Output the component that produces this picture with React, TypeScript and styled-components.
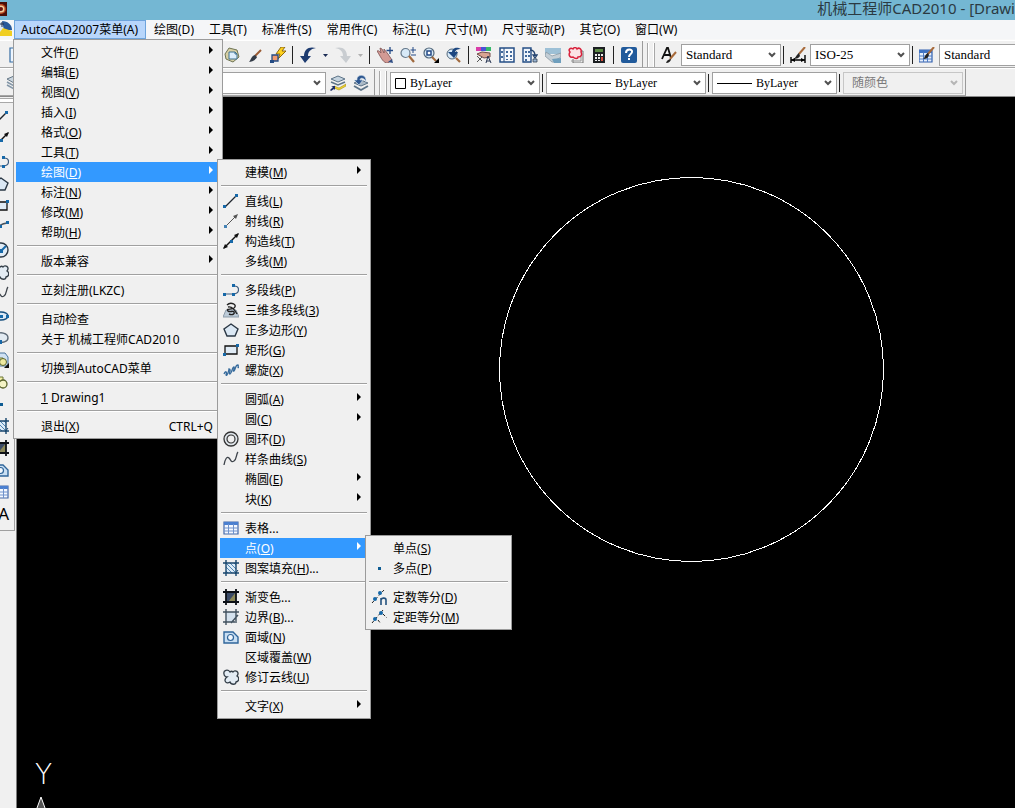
import React from 'react';
import styled, { createGlobalStyle, css } from 'styled-components';

const GlobalStyle = createGlobalStyle`
  * { box-sizing: border-box; }
  body {
    margin: 0;
    background: #f0f0f0;
    color: #000;
    font: 12px/20px "Noto Sans", "Noto Sans CJK SC", sans-serif;
  }
  button, select { font: inherit; color: inherit; }
`;

/* ---------- layout ---------- */

const Window = styled.div`
  display: flex;
  flex-direction: column;
  min-height: 100vh;
  overflow: hidden;
`;

const TitleBar = styled.header`
  display: flex;
  align-items: center;
  justify-content: space-between;
  height: 20px;
  background: #74b7d3;
  overflow: hidden;
`;

const Title = styled.h1`
  margin: 0 0 4px;
  font-size: 15px;
  line-height: 20px;
  font-weight: 400;
  white-space: nowrap;
  color: #2b3a42;
`;

const AppIcon = styled.svg`
  width: 14px;
  height: 18px;
  flex: none;
  display: block;
`;

const MenuBar = styled.nav`
  display: flex;
  height: 20px;
  background: #f5f6f8;
  border-bottom: 1px solid #f8f8f8;
`;

const MenuHost = styled.div`
  position: relative;
  display: flex;
  z-index: 10;
`;

const MenuTitle = styled.button<{ $open?: boolean }>`
  height: 19px;
  padding: ${(p) => (p.$open ? '0 7px 0 6px' : '0 6px')};
  margin-right: 1px;
  line-height: 17px;
  white-space: nowrap;
  background: ${(p) => (p.$open ? '#b8d6fb' : 'transparent')};
  border: 1px solid ${(p) => (p.$open ? '#6ea4dc' : 'transparent')};
`;

const ToolRow = styled.div`
  display: flex;
  height: 28px;
  border-top: 1px solid #fff;
  overflow: hidden;
`;

const ToolRows = styled.div`
  border-bottom: 1px solid #8a8a8a;
`;

const ToolStrip = styled.div<{ $open?: boolean }>`
  display: flex;
  flex: none;
  align-items: center;
  padding: 2px 2px 0;
  border-right: ${(p) => (p.$open ? '0' : '1px solid #9a9a9a')};
  border-bottom: 1px solid #a6a6a6;
  ${(p) => p.$open && css`flex: 1;`}
`;

const Hidden = styled.div`
  width: 195px;
`;

const ToolButton = styled.button`
  display: flex;
  align-items: center;
  justify-content: center;
  width: 23px;
  height: 24px;
  padding: 0;
  border: 0;
  background: none;
  flex: none;
`;

const SplitArrow = styled(ToolButton)<{ $off?: boolean }>`
  width: 12px;
  color: ${(p) => (p.$off ? '#b0b0b0' : '#1b2c55')};
`;

const Divider = styled.span<{ $tight?: boolean }>`
  width: 1px;
  height: 18px;
  margin: 0 ${(p) => (p.$tight ? 2 : 3)}px;
  background: #222;
  flex: none;
`;

const Grip = styled.span`
  width: 8px;
  height: 24px;
  margin: 0 2px;
  border: solid #a8a8a8;
  border-width: 0 1px;
  box-shadow: inset 1px 0 #fff, inset -1px 0 #fff;
  flex: none;
`;

const ComboBox = styled.label<{ $width: number; $off?: boolean }>`
  display: flex;
  align-items: center;
  gap: 4px;
  flex: none;
  width: ${(p) => p.$width}px;
  height: 22px;
  margin-left: 1px;
  padding: 0 4px;
  border: 1px solid ${(p) => (p.$off ? '#c6c6c6' : '#a0a0a0')};
  background: ${(p) => (p.$off ? '#f0f0f0' : '#fff')};
  color: ${(p) => (p.$off ? '#7a7a7a' : '#000')};
`;

const ComboSelect = styled.select<{ $large?: boolean }>`
  appearance: none;
  flex: 1;
  min-width: 0;
  padding: 0;
  border: 0;
  background: transparent;
  opacity: 1;
  color: inherit;
  font-family: "Liberation Serif", "Noto Sans CJK SC", serif;
  font-size: ${(p) => (p.$large ? 13 : 12)}px;
  line-height: 18px;
`;

const Workspace = styled.main`
  display: flex;
  flex: 1;
`;

const Dock = styled.aside`
  width: 17px;
  flex: none;
  border-right: 1px solid #7c7c7c;
`;

const DrawTools = styled.div`
  display: flex;
  flex-direction: column;
  width: 15px;
  padding-bottom: 5px;
  border-right: 1px solid #a0a0a0;
  border-bottom: 1px solid #a0a0a0;
  overflow: hidden;
`;

const DockGrip = styled.span`
  height: 5px;
  margin: 1px 0 4px;
  border: solid #a8a8a8;
  border-width: 1px 0;
  background: #fff;
`;

const DockButton = styled.button`
  display: flex;
  align-items: center;
  justify-content: flex-end;
  height: 22px;
  padding: 0 5px 0 0;
  border: 0;
  background: none;
  font-size: 17px;
  svg { flex: none; }
`;

const Canvas = styled.svg`
  flex: 1;
  min-width: 0;
  background: #000;
  overflow: hidden;
`;

const AxisLabel = styled.text`
  font-family: "DejaVu Sans Light", "DejaVu Sans", sans-serif;
  font-weight: 200;
  font-size: 28px;
  fill: #fff;
`;

/* ---------- menus ---------- */

const Popup = styled.ul<{ $width: number; $sub?: boolean }>`
  position: absolute;
  top: ${(p) => (p.$sub ? '-3px' : '19px')};
  left: ${(p) => (p.$sub ? 'calc(100% - 3px)' : '-1px')};
  width: ${(p) => p.$width}px;
  margin: 0;
  padding: 2px;
  list-style: none;
  background: #f0f0f0;
  border: 1px solid #9b9b9b;
  z-index: 1;
`;

const Entry = styled.li`
  position: relative;
`;

const EntryButton = styled.button<{ $active?: boolean }>`
  display: grid;
  grid-template-columns: 22px 1fr auto;
  align-items: center;
  width: 100%;
  height: 20px;
  padding: 0 2px 0 3px;
  border: 0;
  text-align: left;
  white-space: nowrap;
  background: ${(p) => (p.$active ? '#3399ff' : 'transparent')};
  color: ${(p) => (p.$active ? '#fff' : '#000')};
`;

const EntryIcon = styled.span`
  display: flex;
`;

const EntryText = styled.span`
  padding-top: 2px;
  line-height: 18px;
`;

const Shortcut = styled(EntryText)`
  margin-right: 5px;
`;

const Arrow = styled.svg`
  width: 4px;
  height: 8px;
  margin: 0 5px 4px 0;
  fill: currentColor;
`;

const Rule = styled.li`
  margin: 3px 1px 4px;
  border-top: 1px solid #a0a0a0;
  border-bottom: 1px solid #fff;
`;

/* ---------- icons ---------- */

const Blue = '#1668a8';
const ink = '#20262e';

const art: Record<string, React.ReactNode> = {
  line: <><path d="M2 14 14 2" stroke={ink} strokeWidth="1.3" /><path d="M0 12h3v3H0zM12 1h3v3h-3z" fill={Blue} /></>,
  ray: <><path d="M2 14 14 2" stroke="#555" /><path d="m15 1-5 2 3 3z" fill="#555" /><path d="M1 12h3v3H1z" fill="#4583b5" /></>,
  xline: <><path d="M1 15 15 1" stroke="#111" strokeWidth="1.4" /><path d="m16 0-5 2 3 3zM0 16l2-5 3 3z" fill="#111" /><path d="M7 7h3v3H7z" fill={Blue} /></>,
  pline: <><path d="M1 12h9M11 4c6 0 6 7 0 8" fill="none" stroke="#3d5c7e" strokeWidth="1.2" /><path d="M0 11h3v3H0zM9 11h3v3H9zM9 2h3v3H9z" fill={Blue} /></>,
  poly3d: <><path d="M3 8h10l3 7H0z" fill="#bccbd8" stroke="#8b9aa8" /><path d="M4 3c4-4 11 0 7 3-3 2-8 0-6 3 2 2 5-1 6 1 1 3-3 3-5 2M5 5c4-1 7 3 9 7" fill="none" stroke="#222" strokeWidth="1.4" /></>,
  polygon: <path d="m8 2 7 5-3 7H4L1 7z" fill="#dbe8f4" stroke="#2a3744" strokeWidth="1.4" />,
  rect: <><path d="M2 4h12v8H2z" fill="#e0ebf5" stroke="#111" strokeWidth="1.3" /><path d="M0 11h3v3H0zM13 2h3v3h-3z" fill={Blue} /></>,
  helix: <path d="M1 12c2-4 3-2 2 1 1 2 3-5 3-6 3 0-1 5 1 5 2-1 2-7 4-7 1 2-2 5 0 4 2-2 1-6 4-6 1 1-1 4 1 2" fill="none" stroke="#356a9c" strokeWidth="1.3" />,
  donut: <><circle cx="8" cy="8" r="7" fill="#dfe5ea" stroke="#333" strokeWidth="1.3" /><circle cx="8" cy="8" r="4" fill="#f0f0f0" stroke="#333" strokeWidth="1.2" /></>,
  spline: <path d="M1 14c1-6 3-9 5-7s2 5 5 3 2-7 4-9" fill="none" stroke="#3d434a" strokeWidth="1.3" />,
  table: <><path d="M1 2h14v12H1z" fill="#f4f8ff" stroke="#4468a8" strokeWidth="1.2" /><path d="M1 2h14v3H1z" fill="#4a7fd0" /><path d="M1 8h14M1 11h14M5.500 4v10M10.500 4v10" stroke="#6f92cc" /></>,
  hatch: <><path d="M3 3h10v10H3z" fill="#dcebf7" /><path d="m3 3 10 10M7 3l6 6M3 7l6 6M11 3l2 2M3 11l2 2" stroke="#4f86b4" /><path d="M3 0v16M13 0v16M0 3h16M0 13h16" stroke="#17466d" strokeWidth="1.4" /><path d="m12 14 3-4" stroke="#17466d" /></>,
  gradient: <><path d="M3 3h10v10H3z" fill="#3a4a66" /><path d="M13 3v10H5z" fill="#8a8757" /><path d="M3 0v16M13 0v16M0 3h16M0 13h16" stroke="#0c1016" strokeWidth="1.8" /></>,
  boundary: <><path d="M3 3h10v6l-4 4H3z" fill="#d5e2ee" /><path d="M3 0v16M13 0v14M0 3h16M0 13h12M8 14l7-8" stroke="#42525f" strokeWidth="1.4" /></>,
  region: <><path d="M1 3h9l5 5v6H1z" fill="#c9dff3" stroke="#2f659a" strokeWidth="1.4" /><circle cx="7.500" cy="8.500" r="3" fill="#f3f8fd" stroke="#2f659a" strokeWidth="1.2" /></>,
  cloud: <path d="M7 3C5 0 0 1 1 5c0 2 2 3 3 3-4 3-1 8 3 5 1 3 6 3 6 0 4-1 3-5 1-6 3-4-2-7-4-4-1-1-2-1-3 0z" fill="#e3ecf4" stroke="#333e48" strokeWidth="1.3" />,
  dot: <path d="M7 7h3v3H7z" fill="#0e5c93" />,
  divide: <><path d="M1 14 13 1" stroke="#222" strokeDasharray="3 2" /><circle cx="4" cy="10" r="2" fill={Blue} /><circle cx="9" cy="4" r="2" fill={Blue} /><path d="M10 16V9v2c1-3 5-2 5 0v5" fill="none" stroke="#24527e" strokeWidth="1.6" /></>,
  measure: <><path d="M1 14 12 1M7 11l3 4M12 5l4 4" stroke="#222" strokeDasharray="3 2" /><circle cx="4" cy="10" r="2" fill={Blue} /><circle cx="10" cy="4" r="2" fill={Blue} /></>,
  arc: <><path d="M1 15C2 8 7 4 14 3" fill="none" stroke="#4b5661" strokeWidth="1.3" /><path d="M13 1h3v3h-3zM6 5h3v3H6z" fill={Blue} /></>,
  circle: <><circle cx="8" cy="8" r="7" fill="#e0ebf5" stroke="#2a3744" strokeWidth="1.4" /><path d="m8 9 5-5" stroke={Blue} strokeWidth="2" /><path d="M6 7h4v4H6z" fill={Blue} /></>,
  ellipse: <><ellipse cx="8" cy="8" rx="7" ry="4" fill="#dbe9f6" stroke="#174f7e" strokeWidth="1.4" /><path d="M13 7h3v3h-3zM7 7h3v3H7z" fill={Blue} /></>,
  earc: <><path d="M2 5c5-4 13-2 13 3 0 4-6 5-10 4" fill="#e2eaf1" stroke="#5b6875" strokeWidth="1.4" /><path d="M5 10h4v4H5z" fill={Blue} /></>,
  insert: <><path d="M3 1h9l3 4v9H3z" fill="#cfe1f3" stroke="#49749e" /><path d="M3 6h7v6H3z" fill="#f2f0a0" stroke="#6b7436" /><circle cx="10" cy="10" r="3.500" fill="#eeeaa0" stroke="#59632c" /><path d="M16 11v5h-5z" fill="#111" /></>,
  block: <><path d="M2 3h8v6H2z" fill="#f3f0a8" stroke="#6b7436" /><circle cx="10" cy="10" r="4" fill="#f4f3c5" stroke="#59632c" strokeWidth="1.3" /></>,
  doc: <path d="M4 1h12v14H4z" fill="#eef6ff" stroke="#356da3" strokeWidth="1.2" />,
  layers: <><path d="m1 4 7-3 7 3-7 4z" fill="#cbd6df" stroke="#657887" /><path d="m1 7 7 4 7-4M1 10l7 4 7-4" fill="none" stroke="#8497a8" strokeWidth="1.5" /></>,
  publish: <><path d="m1 7 4-6 8 2 2 7-6 5-7-3z" fill="#d7cfa4" stroke="#6f7554" /><path d="M5 5h6l2 2v5H5z" fill="#dceefc" stroke="#3d7190" /><path d="M11 5v2h2" fill="none" stroke="#3d7190" /></>,
  brush: <><path d="m8 9 6-6" stroke="#9b5c34" strokeWidth="2" /><path d="M2 15c2 0 7-2 8-5L8 8c-4 1-4 5-6 7z" fill="#333b47" /></>,
  match: <><path d="M11 0 6 7h4l-2 5 8-8h-4l3-4z" fill="#ffd21d" stroke="#8b6715" /><path d="M2 8h6v6H2z" fill="#f19a70" stroke="#234b84" strokeWidth="1.300" /><path d="M0 13h4v3H0z" fill="#234b84" /></>,
  undo: <path d="M16 1C9-1 4 2 4 9H0l5 7 6-7H8c0-4 2-7 8-8z" fill="#1d3b70" />,
  redo: <path d="M0 1c7-2 12 1 12 8h4l-5 7-6-7h3c0-4-2-7-8-8z" fill="#c9cdd1" />,
  pan: <><path d="M0 4c2-1 3 1 4 2L3 1l2 1 2 4 0-4 4 5 4 6-4 3c-5 0-6-4-11-12z" fill="#d39a94" stroke="#7c5151" strokeWidth=".8" /><path d="m11 15 4-3 1 4z" fill="#2f4e85" /><path d="M13 0v7M9.500 3.500H16" stroke="#244a86" strokeWidth="1.3" /></>,
  zoom: <><circle cx="5.500" cy="6" r="4.500" fill="#d7e9f7" stroke="#65788a" strokeWidth="1.2" /><path d="m9 9 5 6" stroke="#a0693d" strokeWidth="2.200" /><path d="M13 0v6M10.500 3H16M11 8h5" stroke="#244a86" /></>,
  zoomwin: <><circle cx="6" cy="6" r="5" fill="#d7e9f7" stroke="#53687b" strokeWidth="1.2" /><path d="M4 4h4v4H4z" fill="#fff" stroke="#244a86" strokeWidth="1.5" /><path d="m9 10 4 4" stroke="#a0693d" strokeWidth="2.200" /><path d="M16 11v5h-5z" fill="#000" /></>,
  zoomprev: <><circle cx="6" cy="7" r="5" fill="#d7e9f7" stroke="#53687b" /><path d="M15 2C10-1 6 2 6 5H2l6 6 4-6h-3c0-2 3-3 6-3z" fill="#1d4780" /><path d="m10 11 4 4" stroke="#a0693d" strokeWidth="2.200" /></>,
  props: <><path d="M0 0h5v4H0z" fill="#d93ca8" /><path d="M5 0h5v4H5z" fill="#4b52d6" /><path d="M10 0h5v4h-5z" fill="#35b86a" /><path d="m1 7 5-2 8 1v4l-6 1z" fill="#d9a493" stroke="#704b49" /><path d="m1 9 5 5M6 10l-5 5" stroke="#555" /><path d="m10 16 2-7 3 7M11 14h3" fill="none" stroke="#23314f" /></>,
  dcenter: <><path d="M1 1h14v14H1z" fill="#f6f9fd" stroke="#254e85" strokeWidth="1.5" /><path d="M5 1v14" stroke="#254e85" /><path d="M7 4h2v2H7zM11 4h2v2h-2zM7 8h2v2H7zM11 8h2v2h-2zM7 12h2v1H7zM11 12h2v1h-2zM2 4h2v2H2zM2 9h2v2H2z" fill="#40689b" /></>,
  palette: <><path d="M1 1h8v14H1z" fill="#eef4fb" stroke="#254e85" strokeWidth="1.4" /><path d="M3 4h2v2H3zM6 4h2v2H6zM3 8h2v2H3zM6 8h2v2H6zM3 12h2v2H3z" fill="#40689b" /><path d="M8 3c4 0 5 2 5 6M11 8h4l-2 3z" fill="none" stroke="#24436f" strokeWidth="1.3" /><path d="M11 12h4v3h-4z" fill="#9bb4d1" stroke="#345" strokeWidth=".8" /></>,
  sheet: <><path d="M0 1h16v6H0z" fill="#9dc0d6" /><path d="m1 5 6 4 9-3v4l-5 3 5 2H7L0 9z" fill="#c3ced6" stroke="#8998a3" strokeWidth=".8" /><path d="m7 12 9-1v5H9z" fill="#6f9fbd" /></>,
  markup: <><path d="M6 4h9v12H5v-4" fill="#ececec" stroke="#777" /><path d="M13 3v11H3" fill="none" stroke="#999" /><path d="M5 2C2 0 0 3 2 5c-2 3 0 6 3 5 2 2 5 2 5 0 4 0 4-3 3-5 1-3-2-5-4-3-1-2-3-2-4 0z" fill="#fbe3e5" stroke="#d8213b" strokeWidth="1.500" /></>,
  calc: <><path d="M2 0h12v16H2z" fill="#1c1f22" /><path d="M4 2h8v3H4z" fill="#5b8a45" /><path d="M4 7h2v2H4zM7 7h2v2H7zM10 7h2v2h-2zM4 10h2v2H4zM7 10h2v2H7zM4 13h2v1H4zM7 13h2v1H7z" fill="#eee" /><path d="M10 10h2v4h-2z" fill="#d34b3c" /></>,
  help: <><rect x="0" y="0" width="16" height="16" rx="2" fill="#215a9b" /><path d="M5 6c0-5 7-4 6-1 0 2-3 2-3 5" fill="none" stroke="#fff" strokeWidth="2" /><path d="M7 11h2v2H7z" fill="#fff" /></>,
  textstyle: <><path d="m1 12 5-11h1l3 10M3 8h6" fill="none" stroke="#111" strokeWidth="1.8" /><path d="m9 12 6-7" stroke="#a86a3a" strokeWidth="2" /><path d="M5 16c1-3 3-4 5-4 0 2-2 4-5 4z" fill="#222" /></>,
  dimstyle: <><path d="m9 7 6-7" stroke="#a86a3a" strokeWidth="2" /><path d="M3 12c3-1 3-4 6-6l1 3c-1 2-3 3-7 3z" fill="#222" /><path d="M1 10v6M15 8v8M1 13h14" stroke="#000" strokeWidth="1.400" /><path d="m1 13 4-2v4zM15 13l-4-2v4z" /></>,
  tablestyle: <><path d="M0 3h13v12H0z" fill="#e6effc" stroke="#305fae" strokeWidth="1.2" /><path d="M0 3h13v3H0z" fill="#3f73c4" /><path d="M0 9h13M0 12h13M4.500 5v10M8.500 5v10" stroke="#4f7cc4" /><path d="m9 7 6-7" stroke="#a86a3a" strokeWidth="2" /><path d="M4 12c2-1 2-5 5-6l1 2c-1 3-3 4-6 4z" fill="#222" /></>,
  layerset: <><path d="m1 4 7-3 7 3-7 3z" fill="#c4d3df" stroke="#5d7488" /><path d="m1 7 7 3 7-3" fill="none" stroke="#5d7488" strokeWidth="1.500" /><path d="m4 11 5 2 7-4v2l-7 4-5-2z" fill="#f2d52a" stroke="#a18a20" strokeWidth=".6" /><path d="M1 11h4v4l-1-1-3 2-1-1 3-3z" fill="#1b2c66" /></>,
  layerprev: <><path d="m1 8 7-3 7 3-7 3z" fill="#aab9c6" stroke="#5d7488" /><path d="m1 11 7 4 7-4" fill="none" stroke="#5d7488" strokeWidth="1.800" /><path d="M13 7c1-9-10-8-9-2H1l5 5 4-5H7c0-3 5-2 6 2z" fill="#2c568f" stroke="#dce7f1" strokeWidth=".6" /></>,
};

function Icon({ name, size = 16 }: { name: string; size?: number }) {
  return (
    <svg width={size} height={size} viewBox="0 0 16 16" aria-hidden="true">
      {art[name]}
    </svg>
  );
}

/* ---------- data ---------- */

type Item = {
  text: string;
  mnemonic?: string;
  tail?: string;
  icon?: string;
  key?: string;
  sub?: boolean;
  children?: MenuData;
  width?: number;
};
type MenuData = (Item | null)[];

const pointMenu: MenuData = [
  { text: '单点', mnemonic: 'S' },
  { text: '多点', mnemonic: 'P', icon: 'dot' },
  null,
  { text: '定数等分', mnemonic: 'D', icon: 'divide' },
  { text: '定距等分', mnemonic: 'M', icon: 'measure' },
];

const drawMenu: MenuData = [
  { text: '建模', mnemonic: 'M', sub: true },
  null,
  { text: '直线', mnemonic: 'L', icon: 'line' },
  { text: '射线', mnemonic: 'R', icon: 'ray' },
  { text: '构造线', mnemonic: 'T', icon: 'xline' },
  { text: '多线', mnemonic: 'M' },
  null,
  { text: '多段线', mnemonic: 'P', icon: 'pline' },
  { text: '三维多段线', mnemonic: '3', icon: 'poly3d' },
  { text: '正多边形', mnemonic: 'Y', icon: 'polygon' },
  { text: '矩形', mnemonic: 'G', icon: 'rect' },
  { text: '螺旋', mnemonic: 'X', icon: 'helix' },
  null,
  { text: '圆弧', mnemonic: 'A', sub: true },
  { text: '圆', mnemonic: 'C', sub: true },
  { text: '圆环', mnemonic: 'D', icon: 'donut' },
  { text: '样条曲线', mnemonic: 'S', icon: 'spline' },
  { text: '椭圆', mnemonic: 'E', sub: true },
  { text: '块', mnemonic: 'K', sub: true },
  null,
  { text: '表格...', icon: 'table' },
  { text: '点', mnemonic: 'O', sub: true, children: pointMenu, width: 147 },
  { text: '图案填充', mnemonic: 'H', tail: '...', icon: 'hatch' },
  null,
  { text: '渐变色...', icon: 'gradient' },
  { text: '边界', mnemonic: 'B', tail: '...', icon: 'boundary' },
  { text: '面域', mnemonic: 'N', icon: 'region' },
  { text: '区域覆盖', mnemonic: 'W' },
  { text: '修订云线', mnemonic: 'U', icon: 'cloud' },
  null,
  { text: '文字', mnemonic: 'X', sub: true },
];

const mainMenu: MenuData = [
  { text: '文件', mnemonic: 'F', sub: true },
  { text: '编辑', mnemonic: 'E', sub: true },
  { text: '视图', mnemonic: 'V', sub: true },
  { text: '插入', mnemonic: 'I', sub: true },
  { text: '格式', mnemonic: 'O', sub: true },
  { text: '工具', mnemonic: 'T', sub: true },
  { text: '绘图', mnemonic: 'D', sub: true, children: drawMenu, width: 154 },
  { text: '标注', mnemonic: 'N', sub: true },
  { text: '修改', mnemonic: 'M', sub: true },
  { text: '帮助', mnemonic: 'H', sub: true },
  null,
  { text: '版本兼容', sub: true },
  null,
  { text: '立刻注册(LKZC)' },
  null,
  { text: '自动检查' },
  { text: '关于 机械工程师CAD2010' },
  null,
  { text: '切换到AutoCAD菜单' },
  null,
  { text: '1 Drawing1' },
  null,
  { text: '退出', mnemonic: 'X', key: 'CTRL+Q' },
];

const menuTitles = [
  '绘图(D)', '工具(T)', '标准件(S)', '常用件(C)', '标注(L)',
  '尺寸(M)', '尺寸驱动(P)', '其它(O)', '窗口(W)',
];

const dockTools: [string, string][] = [
  ['line', '直线'], ['xline', '构造线'], ['pline', '多段线'], ['polygon', '正多边形'],
  ['rect', '矩形'], ['arc', '圆弧'], ['circle', '圆'], ['cloud', '修订云线'],
  ['spline', '样条曲线'], ['ellipse', '椭圆'], ['earc', '椭圆弧'], ['insert', '插入块'],
  ['block', '创建块'], ['dot', '点'], ['hatch', '图案填充'], ['gradient', '渐变色'],
  ['region', '面域'], ['table', '表格'],
];

/* ---------- parts ---------- */

function Label({ item }: { item: Item }) {
  if (item.text.startsWith('1 ')) {
    return <EntryText><u>1</u>{item.text.slice(1)}</EntryText>;
  }
  return (
    <EntryText>
      {item.text}
      {item.mnemonic && <>(<u>{item.mnemonic}</u>)</>}
      {item.tail}
    </EntryText>
  );
}

function Menu({ data, width, nested }: { data: MenuData; width: number; nested?: boolean }) {
  return (
    <Popup role="menu" $width={width} $sub={nested}>
      {data.map((item, i) =>
        item === null ? (
          <Rule key={i} role="separator" />
        ) : (
          <Entry key={i} role="none">
            <EntryButton role="menuitem" $active={!!item.children}>
              <EntryIcon>{item.icon && <Icon name={item.icon} />}</EntryIcon>
              <Label item={item} />
              {item.key && <Shortcut>{item.key}</Shortcut>}
              {item.sub && <Arrow viewBox="0 0 4 8"><path d="M0 0l4 4-4 4z" /></Arrow>}
            </EntryButton>
            {item.children && <Menu data={item.children} width={item.width ?? 150} nested />}
          </Entry>
        ),
      )}
    </Popup>
  );
}

function Tool({ icon, label }: { icon: string; label: string }) {
  return (
    <ToolButton aria-label={label}>
      <Icon name={icon} />
    </ToolButton>
  );
}

function Combo(props: {
  label: string;
  value: string;
  width: number;
  large?: boolean;
  off?: boolean;
  children?: React.ReactNode;
}) {
  return (
    <ComboBox $width={props.width} $off={props.off}>
      {props.children}
      <ComboSelect aria-label={props.label} $large={props.large} disabled={props.off}>
        <option>{props.value}</option>
      </ComboSelect>
      <svg width="8" height="6" viewBox="0 0 8 6" aria-hidden="true">
        <path d="m1 1 3 3 3-3" fill="none" stroke={props.off ? '#b5b5b5' : '#505050'} strokeWidth="2" />
      </svg>
    </ComboBox>
  );
}

function LinePreview({ width }: { width: number }) {
  return (
    <svg width={width} height="2" aria-hidden="true">
      <path d={`M0 1h${width}`} stroke="#000" shapeRendering="crispEdges" />
    </svg>
  );
}

function DropMark() {
  return <svg width="5" height="3" viewBox="0 0 5 3" aria-hidden="true"><path d="M0 0h5L2.500 3z" fill="currentColor" /></svg>;
}

export default function App() {
  return (
    <Window>
      <GlobalStyle />
      <TitleBar>
        <AppIcon viewBox="0 0 14 18" aria-hidden="true">
          <path d="M0 1h7v14H0z" fill="#4b1008" />
          <circle cx="1" cy="8" r="5" fill="#b8461f" />
          <circle cx="1" cy="8" r="3.500" fill="#f0cf9c" />
          <circle cx="1" cy="8" r="2" fill="#6b1510" />
        </AppIcon>
        <Title>机械工程师CAD2010 - [Drawi</Title>
      </TitleBar>

      <MenuBar>
        <AppIcon viewBox="0 0 14 18" aria-hidden="true">
          <path d="M0 2h7l5 4v10H0z" fill="#dfeaf5" />
          <path d="M2 1c6 0 10 4 10 9H4z" fill="#28599a" />
          <path d="m0 12 3-4 9 3v5H0z" fill="#f0ce22" />
          <path d="M0 4h4M2 2v5" stroke="#1a2f52" />
        </AppIcon>
        <MenuHost>
          <MenuTitle $open aria-haspopup="menu" aria-expanded="true">AutoCAD2007菜单(A)</MenuTitle>
          <Menu data={mainMenu} width={210} />
        </MenuHost>
        {menuTitles.map((t) => <MenuTitle key={t}>{t}</MenuTitle>)}
      </MenuBar>

      <ToolRows>
        <ToolRow>
          <ToolStrip>
            <Tool icon="doc" label="新建" />
            <Hidden />
            <Tool icon="publish" label="发布" />
            <Tool icon="brush" label="特性匹配" />
            <Tool icon="match" label="块编辑器" />
            <Divider />
            <Tool icon="undo" label="放弃" />
            <SplitArrow aria-label="放弃列表"><DropMark /></SplitArrow>
            <Tool icon="redo" label="重做" />
            <SplitArrow $off aria-label="重做列表"><DropMark /></SplitArrow>
            <Divider />
            <Tool icon="pan" label="平移" />
            <Tool icon="zoom" label="实时缩放" />
            <Tool icon="zoomwin" label="窗口缩放" />
            <Tool icon="zoomprev" label="缩放上一个" />
            <Divider />
            <Tool icon="props" label="特性" />
            <Tool icon="dcenter" label="设计中心" />
            <Tool icon="palette" label="工具选项板" />
            <Tool icon="sheet" label="图纸集" />
            <Tool icon="markup" label="标记集" />
            <Tool icon="calc" label="计算器" />
            <Divider />
            <Tool icon="help" label="帮助" />
          </ToolStrip>
          <ToolStrip $open>
            <Grip />
            <Tool icon="textstyle" label="文字样式" />
            <Combo label="文字样式" value="Standard" width={100} large />
            <Divider $tight />
            <Tool icon="dimstyle" label="标注样式" />
            <Combo label="标注样式" value="ISO-25" width={100} large />
            <Divider $tight />
            <Tool icon="tablestyle" label="表格样式" />
            <Combo label="表格样式" value="Standard" width={100} large />
          </ToolStrip>
        </ToolRow>
        <ToolRow>
          <ToolStrip>
            <Tool icon="layers" label="图层" />
            <Combo label="图层" value="" width={300} />
            <Tool icon="layerset" label="置为当前" />
            <Tool icon="layerprev" label="上一个图层" />
          </ToolStrip>
          <ToolStrip>
            <Grip />
            <Combo label="颜色" value="ByLayer" width={150}>
              <svg width="11" height="11" aria-hidden="true">
                <path d="M.5.5h10v10H.5z" fill="#fff" stroke="#000" />
              </svg>
            </Combo>
            <Divider $tight />
            <Combo label="线型" value="ByLayer" width={160}>
              <LinePreview width={60} />
            </Combo>
            <Divider $tight />
            <Combo label="线宽" value="ByLayer" width={125}>
              <LinePreview width={35} />
            </Combo>
            <Divider $tight />
            <Combo label="打印样式" value="随颜色" width={120} off>
              <span />
            </Combo>
          </ToolStrip>
        </ToolRow>
      </ToolRows>

      <Workspace>
        <Dock>
          <DrawTools>
            <DockGrip />
            {dockTools.map(([icon, label]) => (
              <DockButton key={icon} aria-label={label}><Icon name={icon} /></DockButton>
            ))}
            <DockButton aria-label="多行文字">A</DockButton>
          </DrawTools>
        </Dock>
        <Canvas role="img" aria-label="Drawing1">
          <circle cx="674.5" cy="272.5" r="192" fill="none" stroke="#fff" shapeRendering="crispEdges" />
          <svg y="100%" overflow="visible">
            <AxisLabel x="18" y="-24">Y</AxisLabel>
            <path d="m20 0 4-11 4 11" fill="#555" stroke="#fff" />
          </svg>
        </Canvas>
      </Workspace>
    </Window>
  );
}
